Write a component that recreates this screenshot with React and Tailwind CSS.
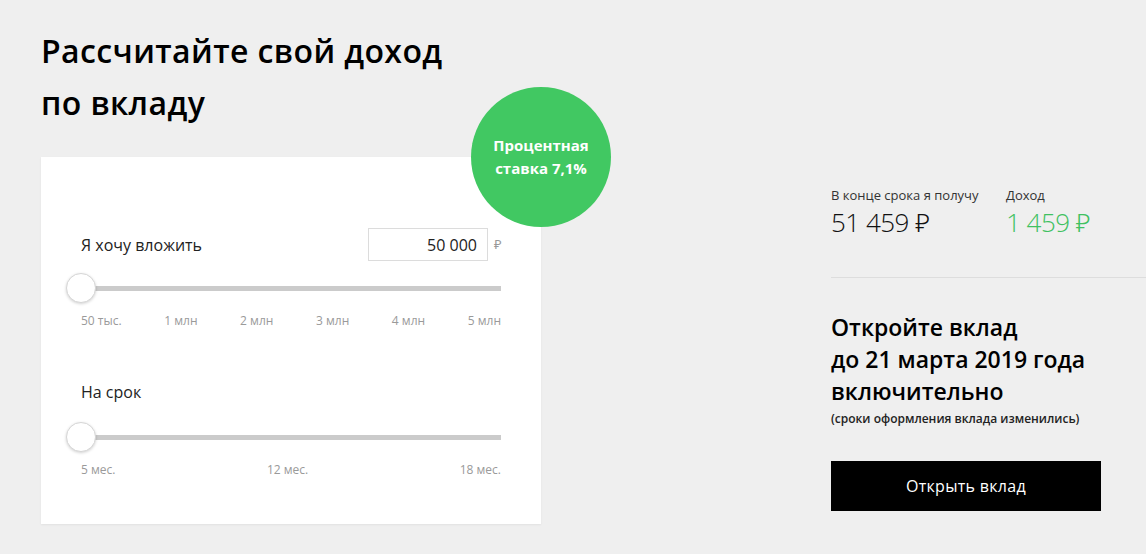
import React from "react";

const font = { fontFamily: '"Open Sans", "Noto Sans", sans-serif' };

function Slider() {
  return (
    <div className="relative h-[30px]">
      <div className="absolute left-0 right-0 top-[13px] h-[5px] bg-[#cbcbcb]" />
      <div className="absolute left-[-15px] top-0 h-[30px] w-[30px] rounded-full border border-[#d6d6d6] bg-white shadow-[0_1px_3px_rgba(0,0,0,0.18)]" />
    </div>
  );
}

export default function App() {
  return (
    <div
      className="flex h-[554px] w-[1146px] overflow-hidden bg-[#efefef] text-[#111]"
      style={font}
    >
      <div className="ml-[41px] flex w-[500px] flex-col pt-[25px]">
        <h1 className="text-[32px] font-semibold leading-[52px] tracking-[0.4px] text-black">
          Рассчитайте свой доход
          <br />
          по вкладу
        </h1>
        <div className="relative mt-[28px] h-[367px] bg-white px-10 shadow-[0_1px_2px_rgba(0,0,0,0.06)]">
          <div className="absolute right-[-70px] top-[-70px] flex h-[140px] w-[140px] items-center justify-center rounded-full bg-[#41c862] text-center text-[15px] font-bold leading-[23px] text-white">
            Процентная
            <br />
            ставка 7,1%
          </div>
          <div className="mt-[71px] flex h-[33px] items-center justify-between">
            <span className="text-[16px] leading-6 text-[#222]">Я хочу вложить</span>
            <div className="flex items-center">
              <div className="flex h-[33px] w-[120px] items-center justify-end border border-[#dcdcdc] pr-[10px] text-[16px] text-[#222]">
                50 000
              </div>
              <span className="ml-[6px] w-[7px] text-[13px] text-[#999]">₽</span>
            </div>
          </div>
          <div className="mt-[12px]">
            <Slider />
          </div>
          <div className="mt-[10px] flex justify-between text-[12px] leading-4 text-[#9a9a9a]">
            <span>50 тыс.</span>
            <span>1 млн</span>
            <span>2 млн</span>
            <span>3 млн</span>
            <span>4 млн</span>
            <span>5 млн</span>
          </div>
          <div className="mt-[51px] text-[16px] leading-6 text-[#222]">На срок</div>
          <div className="mt-[18px]">
            <Slider />
          </div>
          <div className="mt-[10px] flex justify-between text-[12px] leading-4 text-[#9a9a9a]">
            <span>5 мес.</span>
            <span>12 мес.</span>
            <span>18 мес.</span>
          </div>
        </div>
      </div>
      <div className="ml-[290px] flex flex-1 flex-col pt-[186px]">
        <div className="flex">
          <div className="w-[175px]">
            <div className="text-[13px] leading-[18px] text-[#333]">В конце срока я получу</div>
            <div className="mt-[2px] text-[26px] font-light leading-[32px] tracking-[-0.5px] text-[#111]">51 459 ₽</div>
          </div>
          <div>
            <div className="text-[13px] leading-[18px] text-[#333]">Доход</div>
            <div className="mt-[2px] text-[26px] font-light leading-[32px] tracking-[-0.5px] text-[#3fc161]">1 459 ₽</div>
          </div>
        </div>
        <div className="mt-[39px] h-px bg-[#dddddd]" />
        <div className="mt-[33px] text-[23px] font-semibold leading-[32px] text-black">
          Откройте вклад
          <br />
          до 21 марта 2019 года
          <br />
          включительно
        </div>
        <div className="mt-[4px] text-[12px] font-semibold leading-4 text-[#222]">
          (сроки оформления вклада изменились)
        </div>
        <button className="mt-[34px] flex h-[50px] w-[270px] items-center justify-center bg-black text-[16px] tracking-[0.3px] text-white">
          Открыть вклад
        </button>
      </div>
    </div>
  );
}
